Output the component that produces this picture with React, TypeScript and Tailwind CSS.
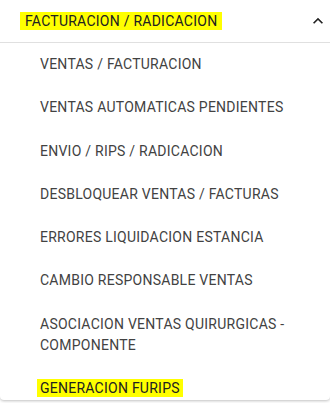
const items: { label: string; highlight?: boolean }[] = [
  { label: "VENTAS / FACTURACION" },
  { label: "VENTAS AUTOMATICAS PENDIENTES" },
  { label: "ENVIO / RIPS / RADICACION" },
  { label: "DESBLOQUEAR VENTAS / FACTURAS" },
  { label: "ERRORES LIQUIDACION ESTANCIA" },
  { label: "CAMBIO RESPONSABLE VENTAS" },
  { label: "ASOCIACION VENTAS QUIRURGICAS - COMPONENTE" },
  { label: "GENERACION FURIPS", highlight: true },
];

function ExpandLess() {
  return (
    <svg width="20" height="20" viewBox="0 0 24 24" fill="#212121">
      <path d="M12 8l-6 6 1.41 1.41L12 10.83l4.59 4.58L18 14z" />
    </svg>
  );
}

export default function App() {
  return (
    <div className="w-[330px] h-[403px] bg-white overflow-hidden font-['Roboto',sans-serif]">
      <div className="h-[400px] bg-white rounded-b-[4px] shadow-[0_1px_3px_rgba(0,0,0,0.25)] overflow-hidden">
        <div className="h-[43px] flex items-center justify-between pl-[20px] pr-[2px] border-b border-[#e0e0e0]">
          <span className="bg-[#ffff00] px-[5px] leading-[18px] text-[14px] text-[#212121] tracking-[0.25px]">
            FACTURACION / RADICACION
          </span>
          <ExpandLess />
        </div>
        <ul className="flex flex-col">
          {items.map((item) => (
            <li
              key={item.label}
              className="pl-[40px] pr-[16px] py-[11px] text-[14px] leading-[21.3px] text-[#424242] tracking-[0.25px]"
            >
              {item.highlight ? (
                <span className="bg-[#ffff00] -ml-[3px] px-[3px] py-[1px] text-[#212121]">
                  {item.label}
                </span>
              ) : (
                item.label
              )}
            </li>
          ))}
        </ul>
      </div>
    </div>
  );
}
